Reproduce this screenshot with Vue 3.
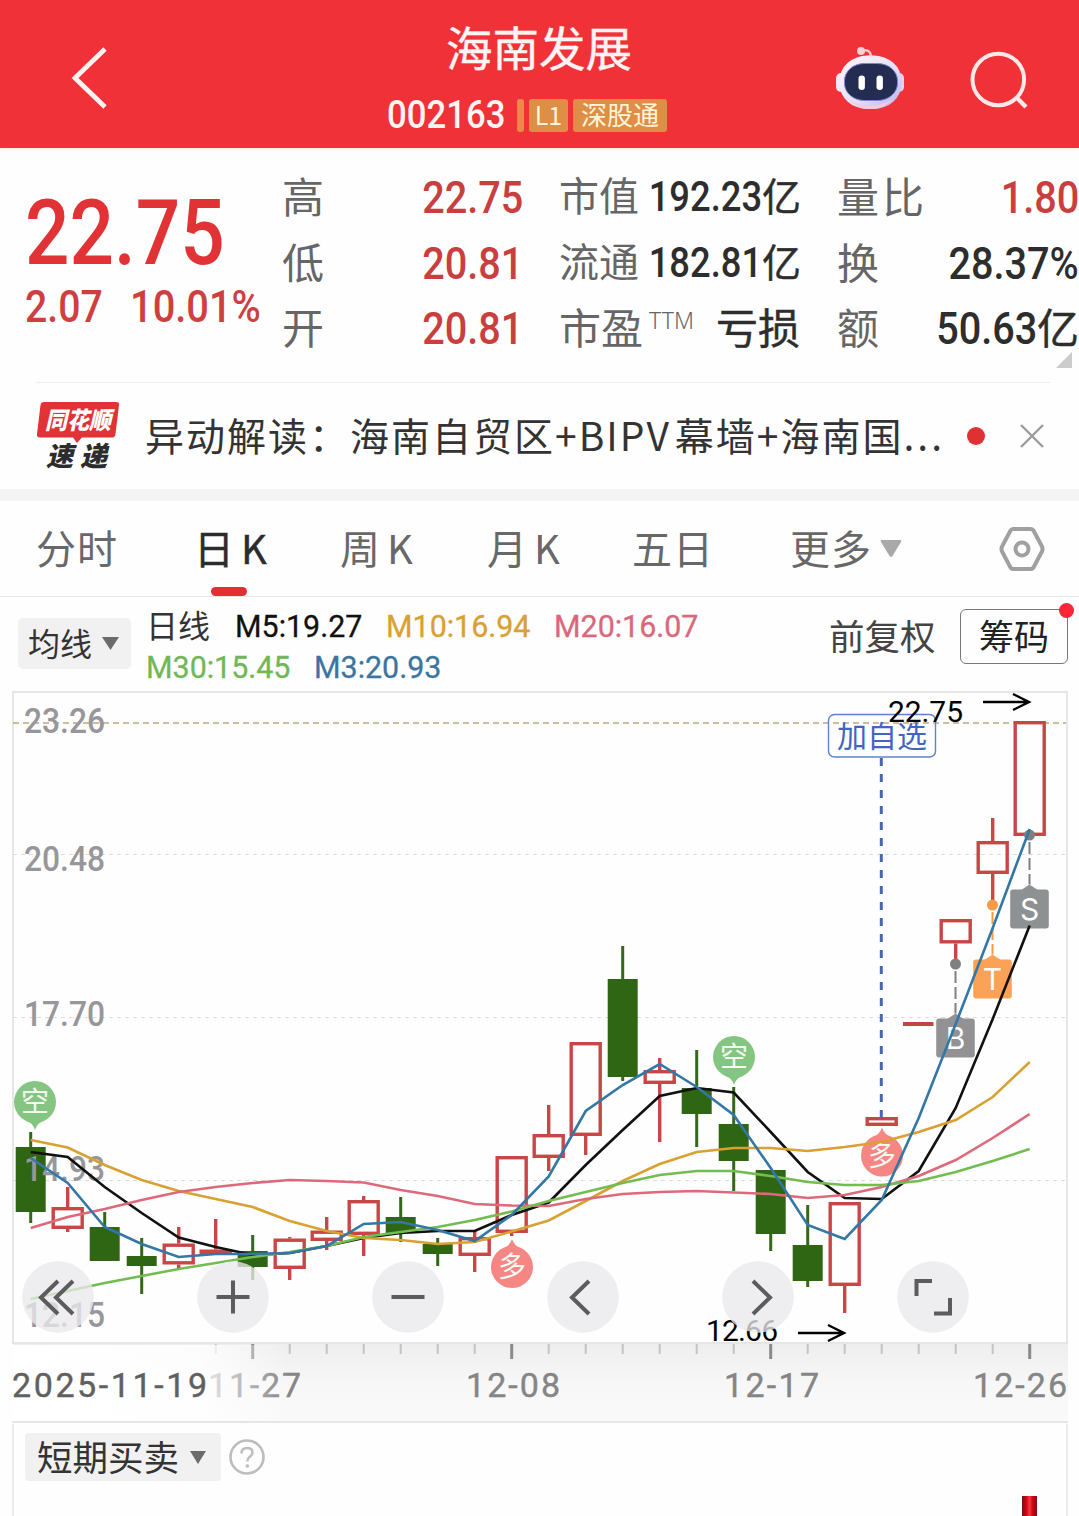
<template>
  <div class="page">
    <header class="topbar">
      <button class="icon-btn back">
        <svg width="40" height="64" viewBox="0 0 40 64">
          <path d="M36 3 L6 32 L36 61" fill="none" stroke="#fff3f2" stroke-width="4.8" />
        </svg>
      </button>
      <div class="stock">
        <h1>海南发展</h1>
        <div class="stock-sub">
          <span class="code">002163</span>
          <i class="tag-bar"></i>
          <span class="tag tag-l1">L1</span>
          <span class="tag tag-sgt">深股通</span>
        </div>
      </div>
      <button class="icon-btn robot">
        <svg width="72" height="66" viewBox="834 46 72 66">
          <defs>
            <linearGradient id="shell" x1="0" y1="0" x2="1" y2="1">
              <stop offset="0" stop-color="#fff4f6" />
              <stop offset="0.55" stop-color="#e6e2fa" />
              <stop offset="1" stop-color="#b4b0ec" />
            </linearGradient>
          </defs>
          <path d="M861 51 Q871 48 871 58" fill="none" stroke="#fbc6cc" stroke-width="2.6" />
          <circle cx="861" cy="51" r="4" fill="#fdd0d5" />
          <rect x="836" y="73" width="10" height="19" rx="5" fill="#f5e6f4" />
          <rect x="894" y="73" width="10" height="19" rx="5" fill="#e2d2f4" />
          <rect x="839.5" y="55.500" width="62" height="53.500" rx="28" ry="25" fill="url(#shell)" />
          <path d="M848 99 Q870 113 893 99 Q884 109 870 109 Q857 109 848 99" fill="#fbc9dd" />
          <rect x="844.500" y="63.500" width="53" height="37" rx="20" ry="17" fill="#242d51" stroke="#7a86cf" stroke-width="1" />
          <rect x="858.500" y="75.500" width="6.400" height="14.500" rx="3.200" fill="#fff" />
          <rect x="876.500" y="75.500" width="6.400" height="14.500" rx="3.200" fill="#fff" />
        </svg>
      </button>
      <button class="icon-btn search">
        <svg width="62" height="62" viewBox="968 50 62 62">
          <circle cx="998.300" cy="79.500" r="25.800" fill="none" stroke="#ffe9e8" stroke-width="4" />
          <path d="M1016 97 L1026 107" stroke="#ffe9e8" stroke-width="4.400" />
        </svg>
      </button>
    </header>

    <section class="quote">
      <div class="price">
        <div class="price-now">22.75</div>
        <div class="price-diff">
          <span class="diff">2.07</span>
          <span class="pct">10.01%</span>
        </div>
      </div>
      <div v-for="(col, i) in quoteCols" :key="i" class="quote-col" :class="'col-' + i">
        <div v-for="cell in col" :key="cell.label" class="cell">
          <span class="label" :class="{ tight: cell.tight }">{{ cell.label }}<sup v-if="cell.sup">{{ cell.sup }}</sup></span>
          <span class="value" :class="{ up: cell.up, narrow: cell.tight }">
            <span v-if="cell.num" class="num">{{ cell.num }}</span><span class="unit">{{ cell.unit }}</span>
          </span>
        </div>
      </div>
      <i class="corner"></i>
    </section>

    <section class="news">
      <div class="logo">
        <svg width="84" height="76" viewBox="36 399 84 76">
          <path d="M44 401 H116 Q119.500 401 119 404 L115.500 433 Q115 436.500 112 436.500 H82 L77 442 L73 436.500 H40 Q36.500 436.500 37 433 L40.500 404 Q41 401 44 401Z" fill="#e13336" />
          <text class="logo-top" x="45" y="428" textLength="66" lengthAdjust="spacingAndGlyphs">同花顺</text>
          <text class="logo-bottom" x="46" y="465" textLength="61">速递</text>
        </svg>
      </div>
      <p>异动解读：海南自贸区+BIPV<span class="after-latin">幕墙+海南国</span><span class="dots">...</span></p>
      <i class="unread"></i>
      <svg class="close" width="24" height="24" viewBox="0 0 24 24">
        <path d="M1 1 L23 23 M23 1 L1 23" stroke="#9b9b9b" stroke-width="2.400" />
      </svg>
    </section>

    <nav class="tabs">
      <span class="tab"><span>分时</span></span>
      <span class="tab active"><span>日<b>K</b></span></span>
      <span class="tab"><span>周<b>K</b></span></span>
      <span class="tab"><span>月<b>K</b></span></span>
      <span class="tab"><span>五日</span></span>
      <span class="tab"><span>更多</span>
        <svg width="22" height="19" viewBox="0 0 22 19"><path d="M2 1 H20 Q22 1 21 3 L12.500 17 Q11 19 9.500 17 L1 3 Q0 1 2 1Z" fill="#a9a9a9" /></svg>
      </span>
      <span class="tab">
        <svg width="46" height="44" viewBox="0 0 46 44">
          <path d="M14 2 H32 Q33.500 2 34.500 3.600 L43 19.500 Q44 22 43 24.500 L34.500 40.400 Q33.500 42 32 42 H14 Q12.500 42 11.500 40.400 L3 24.500 Q2 22 3 19.500 L11.500 3.600 Q12.500 2 14 2Z" fill="none" stroke="#a0a0a0" stroke-width="4" />
          <circle cx="23" cy="22" r="6.500" fill="none" stroke="#a0a0a0" stroke-width="4" />
        </svg>
      </span>
    </nav>

    <section class="ma-bar">
      <div class="select"><span>均线</span>
        <svg width="19" height="13" viewBox="0 0 19 13"><path d="M1 0 H18 L9.500 13Z" fill="#6b6b6b" /></svg>
      </div>
      <div class="ma-list">
        <div class="ma-row">
          <span class="ma-title">日线</span>
          <span class="ma m5">M5:19.27</span>
          <span class="ma m10">M10:16.94</span>
          <span class="ma m20">M20:16.07</span>
        </div>
        <div class="ma-row">
          <span class="ma m30">M30:15.45</span>
          <span class="ma m3">M3:20.93</span>
        </div>
      </div>
      <span class="adjust">前复权</span>
      <span class="chips">筹码<i></i></span>
    </section>

    <svg class="chart" width="1079" height="734" viewBox="0 690 1079 734">
      <defs>
        <linearGradient id="strip" x1="0" y1="0" x2="0" y2="1">
          <stop offset="0" stop-color="#eeeeee" />
          <stop offset="0.5" stop-color="#f7f7f7" />
          <stop offset="1" stop-color="#fafafa" />
        </linearGradient>
        <linearGradient id="fade" x1="0" y1="0" x2="1" y2="0">
          <stop offset="0" stop-color="#fff" />
          <stop offset="0.68" stop-color="#fff" stop-opacity="0.850" />
          <stop offset="1" stop-color="#fff" stop-opacity="0" />
        </linearGradient>
      </defs>

      <!-- date strip -->
      <rect x="13" y="1344" width="1055" height="79" fill="url(#strip)" />
      <rect
        v-for="t in ticks"
        :key="'t' + t.x"
        :x="t.x - t.w / 2"
        y="1344"
        :width="t.w"
        :height="t.major ? 15 : 10"
        :fill="t.major ? '#8a8a8a' : '#c4c4c4'"
      />
      <text class="date" x="208" y="1397" textLength="93">11-27</text>
      <rect x="13" y="1345" width="275" height="76" fill="url(#fade)" />
      <text class="date first" x="12" y="1397" textLength="195">2025-11-19</text>
      <text class="date" x="466" y="1397" textLength="94">12-08</text>
      <text class="date" x="724" y="1397" textLength="95">12-17</text>
      <text class="date" x="973" y="1397" textLength="94">12-26</text>

      <!-- frame and grid -->
      <rect x="13" y="692" width="1054" height="651" fill="#fefefe" stroke="#e6e6e6" stroke-width="2" />
      <path d="M12 1422 H1068" stroke="#e6e6e6" stroke-width="2" />
      <path d="M13 854.500 H1066 M13 1017.500 H1066 M13 1180.500 H1066" stroke="#dcdcdc" stroke-width="1.200" stroke-dasharray="4 4" />
      <path d="M13 723 H1066" stroke="#bfa878" stroke-width="1.700" stroke-dasharray="6 4" />

      <g v-for="c in candles" :key="c.x">
        <template v-if="c.up">
          <path :d="c.wicks" stroke="#c84646" stroke-width="3.400" />
          <rect :x="c.x - 14.500" :y="c.top + 1.700" width="29" :height="c.h - 3.400" fill="none" stroke="#c84646" stroke-width="3.400" />
        </template>
        <template v-else>
          <path :d="c.wicks" stroke="#35691a" stroke-width="3" />
          <rect :x="c.x - 15" :y="c.top" width="30" :height="c.h" fill="#2f6614" />
        </template>
      </g>
      <path d="M903 1024 H933.500" stroke="#c04545" stroke-width="4" />

      <g class="axis">
        <text x="24" y="733" textLength="81" lengthAdjust="spacingAndGlyphs">23.26</text>
        <text x="24" y="871" textLength="81" lengthAdjust="spacingAndGlyphs">20.48</text>
        <text x="24" y="1026" textLength="81" lengthAdjust="spacingAndGlyphs">17.70</text>
        <text x="24" y="1181" textLength="81" lengthAdjust="spacingAndGlyphs">14.93</text>
        <text x="24" y="1327" textLength="81" lengthAdjust="spacingAndGlyphs">12.15</text>
      </g>

      <!-- long / short signals -->
      <g v-for="s in signals" :key="s.x">
        <circle :cx="s.x" :cy="s.y" r="21" :fill="s.short ? '#85c582' : '#f58683'" />
        <path :d="s.tip" :fill="s.short ? '#85c582' : '#f58683'" />
        <text class="signal" :x="s.x" :y="s.y + 10">{{ s.short ? '空' : '多' }}</text>
      </g>

      <!-- trade marks -->
      <g v-for="m in marks" :key="m.text">
        <path :d="`M${m.x} ${m.dot + 7} V${m.top - 5}`" :stroke="m.line" stroke-width="2" stroke-dasharray="12 4" />
        <circle :cx="m.x" :cy="m.dot" r="5.500" :fill="m.line" />
        <path :d="`M${m.x - 9} ${m.top + 1} L${m.x} ${m.top - 5} L${m.x + 9} ${m.top + 1}Z`" :fill="m.color" />
        <rect :x="m.x - 19.300" :y="m.top" width="38.600" height="39" rx="3" :fill="m.color" />
        <text class="mark" :x="m.x" :y="m.top + 30">{{ m.text }}</text>
      </g>

      <polyline v-for="l in lines" :key="l.color" :points="l.points" fill="none" :stroke="l.color" stroke-width="2.600" />

      <path d="M881.300 758 V1118" stroke="#4668b4" stroke-width="3" stroke-dasharray="8 8" />
      <rect x="828.500" y="714.500" width="107" height="42.500" rx="6" fill="none" stroke="#5e83c8" stroke-width="1.400" />
      <text class="watch" x="837" y="747" textLength="90">加自选</text>
      <text class="extreme" x="888" y="722" textLength="75">22.75</text>
      <path d="M983 702 H1029 M1013 694 L1029 702 L1013 710" class="arrow" />
      <text class="extreme" x="706" y="1341" textLength="72">12.66</text>
      <path d="M798 1333 H844 M828 1325 L844 1333 L828 1341" class="arrow" />

      <!-- floating controls -->
      <g v-for="b in buttons" :key="b.x" fill="none" stroke="#5c5c5c" stroke-width="4">
        <circle :cx="b.x" cy="1297" r="35.800" fill="#e9e8ea" fill-opacity="0.780" stroke="none" />
        <path :d="b.d" />
      </g>
    </svg>

    <section class="sub-panel">
      <div class="select wide"><span>短期买卖</span>
        <svg width="18" height="13" viewBox="0 0 18 13"><path d="M1 0 H17 L9 13Z" fill="#6b6b6b" /></svg>
      </div>
      <svg class="help" width="36" height="36" viewBox="0 0 36 36">
        <circle cx="18" cy="18" r="16.500" fill="none" stroke="#bdbdbd" stroke-width="2.600" />
        <path d="M12.500 14.500 Q12.500 9 18 9 Q23.500 9 23.500 13.500 Q23.500 16 20.500 18 Q18.300 19.500 18.300 22.500" fill="none" stroke="#bdbdbd" stroke-width="2.400" />
        <circle cx="18.300" cy="27" r="1.800" fill="#bdbdbd" />
      </svg>
      <i class="volume"></i>
    </section>
  </div>
</template>

<script setup>
const quoteCols = [
  [
    { label: '高', num: '22.75', up: true },
    { label: '低', num: '20.81', up: true },
    { label: '开', num: '20.81', up: true },
  ],
  [
    { label: '市值', num: '192.23', unit: '亿', tight: true },
    { label: '流通', num: '182.81', unit: '亿', tight: true },
    { label: '市盈', sup: 'TTM', unit: '亏损' },
  ],
  [
    { label: '量比', num: '1.80', up: true },
    { label: '换', num: '28.37%' },
    { label: '额', num: '50.63', unit: '亿' },
  ],
];

const STEP = 37;
const xAt = (i) => 30.7 + i * STEP;

// [up, body top, body bottom, high, low]
const rawCandles = [
  [0, 1147, 1212, 1132, 1223],
  [1, 1207, 1229, 1187, 1232],
  [0, 1227, 1261, 1212, 1261],
  [0, 1256, 1266, 1238, 1294],
  [1, 1243.5, 1264.5, 1227, 1268],
  [1, 1249.5, 1255, 1219, 1255],
  [0, 1251, 1267, 1235, 1280],
  [1, 1238.5, 1269, 1237, 1280],
  [1, 1230.5, 1241, 1217, 1250],
  [1, 1200, 1235, 1196, 1256],
  [0, 1217, 1233, 1197, 1242],
  [0, 1244, 1254, 1238, 1266],
  [1, 1237, 1256, 1230, 1272],
  [1, 1156, 1233, 1156, 1236],
  [1, 1134, 1158, 1105, 1171],
  [1, 1042, 1136, 1042, 1155],
  [0, 979, 1077, 946, 1081],
  [1, 1070, 1084, 1058, 1142],
  [0, 1088, 1114, 1050, 1147],
  [0, 1124, 1161, 1087, 1191],
  [0, 1170, 1234, 1170, 1251],
  [0, 1245, 1281, 1205, 1287],
  [1, 1202, 1286, 1202, 1313],
  [1, 1117, 1126, 1117, 1126],
  null,
  [1, 919, 943.5, 919, 963],
  [1, 841, 874, 818, 905],
  [1, 721, 836, 721, 836],
];

const candles = rawCandles
  .map((c, i) => c && {
    x: xAt(i),
    up: !!c[0],
    top: c[1],
    h: c[2] - c[1],
    wicks: `M${xAt(i)} ${c[3]} V${c[1]} M${xAt(i)} ${c[2]} V${c[4]}`,
  })
  .filter(Boolean);

const toPoints = (ys) => ys.map((y, i) => `${xAt(i)},${y}`).join(' ');

const lines = [
  { color: '#111111', points: toPoints([1152, 1157, 1187, 1213, 1237.5, 1247, 1255, 1253, 1246, 1238, 1233, 1231, 1231, 1215, 1202.5, 1165, 1130, 1096, 1088, 1092.5, 1132, 1172, 1198, 1199, 1171, 1108, 1019, 925.5]) },
  { color: '#d9a032', points: toPoints([1140, 1147.5, 1165, 1180, 1191, 1199, 1207, 1221, 1231, 1238, 1240, 1244, 1242, 1231.5, 1220.5, 1201, 1181, 1164, 1152, 1148, 1148, 1151, 1147, 1142, 1132, 1120, 1097, 1062]) },
  { color: '#de697b', points: toPoints([1228, 1217, 1209, 1200, 1192, 1187, 1183, 1180, 1181, 1182.5, 1190, 1196, 1204, 1205.5, 1206, 1199, 1194, 1192, 1191, 1192.5, 1194, 1198, 1195, 1187, 1176, 1160, 1138, 1114]) },
  { color: '#72bd50', points: toPoints([1299, 1291, 1283, 1276, 1269, 1263, 1257, 1252, 1246, 1237, 1232, 1227, 1220, 1211.5, 1201, 1192, 1183, 1175, 1171, 1171, 1176, 1182, 1185, 1185, 1181, 1172, 1161, 1149]) },
  { color: '#3477a5', points: toPoints([1158, 1183, 1227, 1244, 1257, 1254, 1254, 1253, 1246, 1224, 1222, 1230, 1241, 1215, 1176.5, 1111, 1085, 1064, 1087, 1115, 1168, 1225, 1239, 1200, 1118, 1024, 928, 829]) },
];

const ticks = Array.from({ length: 23 }, (_, k) => {
  const i = k + 5;
  const major = (i - 6) % 7 === 0;
  return { x: xAt(i), major, w: major ? 3 : 2 };
});

const signals = [
  { x: 35, y: 1102, short: true },
  { x: 734, y: 1057, short: true },
  { x: 512, y: 1267 },
  { x: 882, y: 1155.5 },
].map((s) => {
  const d = s.short ? 1 : -1;
  return { ...s, tip: `M${s.x - 11} ${s.y + 17 * d} Q${s.x - 2} ${s.y + 21 * d} ${s.x} ${s.y + 28 * d} Q${s.x + 2} ${s.y + 21 * d} ${s.x + 11} ${s.y + 17 * d}Z` };
});

const marks = [
  { text: 'S', x: 1029.5, dot: 835, top: 889.5, color: '#8e9192', line: '#7b8083' },
  { text: 'T', x: 992.5, dot: 905, top: 959.5, color: '#fba257', line: '#f59b45' },
  { text: 'B', x: 955.5, dot: 964, top: 1018.5, color: '#929294', line: '#808082' },
];

const buttons = [
  { x: 58, d: 'M58 1281 L41 1297.500 L58 1314 M73 1281 L56 1297.500 L73 1314' },
  { x: 233, d: 'M216.500 1297 H249.500 M233 1280.500 V1313.500' },
  { x: 408, d: 'M391.500 1297 H424.500' },
  { x: 583, d: 'M589 1281 L572 1297.500 L589 1314' },
  { x: 758, d: 'M753 1281 L770 1297.500 L753 1314' },
  { x: 933, d: 'M932 1281 H916.500 V1296 M934 1313.500 H950 V1298' },
];
</script>

<style>
body {
  margin: 0;
  background: #fefefe;
}
</style>

<style scoped>
.page {
  width: 1079px;
  height: 1516px;
  overflow: hidden;
  background: #fefefe;
  color: #333;
  font-family: "Noto Sans CJK SC", sans-serif;
}

.topbar {
  display: flex;
  align-items: flex-start;
  height: 148px;
  background: #f03238;
  box-shadow: 0 2px 2px #fdeee8;
}

.icon-btn {
  border: 0;
  padding: 0;
  background: none;
}

.icon-btn svg {
  display: block;
}

.back {
  margin: 46px 0 0 69px;
}

.stock {
  width: 304px;
  margin-left: 278px;
}

h1 {
  margin: 13px 0 0;
  text-align: center;
  font-size: 46.5px;
  line-height: 66px;
  font-weight: 400;
  color: #fff4f3;
  -webkit-text-stroke: 0.4px currentColor;
  white-space: nowrap;
}

.stock-sub {
  display: flex;
  align-items: center;
  height: 34px;
  margin-top: 19px;
}

.code {
  width: 130px;
  font: 500 39px/34px Roboto, sans-serif;
  color: #fff4f3;
  transform: scaleX(0.89);
  transform-origin: left;
}

.tag-bar {
  width: 7px;
  height: 33px;
  border-radius: 3px;
  background: #e98c49;
}

.tag {
  height: 33px;
  margin-left: 5px;
  border-radius: 3px;
  background: #df8e47;
  color: #fff6d8;
  text-align: center;
  font-size: 26px;
  line-height: 30px;
  white-space: nowrap;
}

.tag-l1 {
  width: 39px;
  font-size: 25px;
}

.tag-sgt {
  width: 94px;
}

.robot {
  margin: 46px 0 0 143px;
}

.search {
  margin: 50px 0 0 62px;
}

.quote {
  position: relative;
  display: flex;
  height: 234px;
}

.price {
  width: 257px;
  padding-left: 25px;
  color: #e13335;
  font-family: Roboto, sans-serif;
  font-weight: 500;
}

.price-now {
  height: 90px;
  margin-top: 40px;
  font-size: 91px;
  line-height: 90px;
  transform: scaleX(0.86);
  transform-origin: left;
}

.price-diff {
  display: flex;
  font-size: 45px;
  line-height: 58px;
  color: #cf3f3f;
}

.price-diff span {
  width: 105px;
  transform: scaleX(0.87);
  transform-origin: left;
}

.price-diff .pct {
  transform: scaleX(0.885);
}

.quote-col {
  width: 241px;
  padding-top: 14px;
}

.col-1 {
  margin-left: 36px;
}

.col-2 {
  width: 242px;
  margin-left: 37px;
}

.cell {
  display: flex;
  justify-content: space-between;
  height: 65.5px;
  line-height: 65.5px;
  white-space: nowrap;
}

.label {
  font-size: 42px;
  color: #666;
}

.col-2 .label {
  letter-spacing: 3px;
}

.label.tight {
  font-size: 40px;
}

sup {
  display: inline-block;
  margin-left: 6px;
  font: 300 23px/24px "Noto Sans", sans-serif;
  vertical-align: 15px;
}

.value {
  color: #2d2d2d;
  font-size: 42px;
}

.num {
  display: inline-block;
  font: 500 44px/65px Roboto, sans-serif;
  transform: scaleX(0.9);
  transform-origin: right;
}

.narrow {
  margin-right: -1px;
  font-size: 39px;
}

.narrow .num {
  margin-left: -22px;
  font-size: 42px;
  transform: scaleX(0.865);
}

.unit {
  -webkit-text-stroke: 0.4px currentColor;
}

.up {
  color: #c93f3f;
}

.corner {
  position: absolute;
  right: 7px;
  bottom: 14px;
  border-left: 16px solid transparent;
  border-bottom: 16px solid #ccc;
}

.news {
  display: flex;
  align-items: center;
  height: 106px;
  margin-left: 36px;
  border-top: 1px solid #ededed;
  margin-right: 29px;
}

.logo {
  width: 84px;
  height: 72px;
}

.logo-top {
  font-size: 24px;
  font-weight: 900;
  font-style: italic;
  fill: #fff;
}

.logo-bottom {
  font-size: 27px;
  font-weight: 900;
  font-style: italic;
  fill: #2c2c2c;
}

.news p {
  width: 821px;
  margin: 0 0 5px 25px;
  font-size: 39px;
  letter-spacing: 2px;
  white-space: nowrap;
}

.after-latin {
  margin-left: 4px;
}

.dots {
  letter-spacing: 3px;
}

.unread {
  width: 18px;
  height: 18px;
  margin-left: 1px;
  border-radius: 50%;
  background: #e13033;
}

.close {
  margin-left: 35px;
}

.tabs {
  display: grid;
  grid-template-columns: 158px 146px 147px 145px 158px 209px auto;
  align-items: center;
  height: 95px;
  padding-left: 36px;
  border-top: 12px solid #f4f4f4;
  border-bottom: 1px solid #e6e6e6;
  color: #686868;
  font-size: 40px;
  letter-spacing: 1px;
}

.tab {
  position: relative;
  display: flex;
  align-items: center;
  height: 95px;
  white-space: nowrap;
}

.tab span {
  padding-bottom: 4px;
}

.tab b {
  margin-left: 6px;
  font-weight: inherit;
}

.tab svg {
  margin-left: 8px;
}

.tab:last-child svg {
  margin-left: 0;
}

.active {
  color: #2c2c2c;
  -webkit-text-stroke: 0.4px currentColor;
}

.active::after {
  content: "";
  position: absolute;
  left: 17px;
  bottom: 0;
  width: 36px;
  height: 9px;
  border-radius: 5px;
  background: #e13033;
}

.ma-bar {
  display: flex;
  align-items: flex-start;
  height: 93px;
  white-space: nowrap;
}

.select {
  display: flex;
  align-items: center;
  justify-content: space-between;
  box-sizing: border-box;
  width: 113px;
  height: 51px;
  margin: 21px 0 0 18px;
  padding: 0 11px 0 10px;
  border-radius: 5px;
  background: #f1f1f1;
  font-size: 32px;
}

.select span {
  padding-bottom: 3px;
}

.ma-list {
  width: 676px;
  padding: 9px 0 0 15px;
}

.ma-row {
  display: flex;
  height: 41px;
  line-height: 41px;
}

.ma-title {
  width: 89px;
  font-size: 32px;
  line-height: 37px;
}

.ma {
  width: 151px;
  font: 400 32px/41px Roboto, sans-serif;
  -webkit-text-stroke: 0.3px currentColor;
  transform: scaleX(0.95);
  transform-origin: left;
}

.m5 { color: #111; }
.m10 { width: 168px; color: #d9a032; }
.m20 { color: #d9687c; }
.m30 { width: 168px; color: #70b857; }
.m3 { color: #3a75a2; }

.adjust {
  width: 131px;
  margin-top: 13px;
  margin-left: 7px;
  font-size: 35.5px;
  line-height: 50px;
  color: #444;
}

.chips {
  position: relative;
  box-sizing: border-box;
  width: 108px;
  height: 55px;
  margin-top: 12px;
  border: 1px solid #777;
  border-radius: 6px;
  text-align: center;
  font-size: 35px;
  line-height: 50px;
  color: #222;
}

.chips i {
  position: absolute;
  top: -7px;
  right: -7px;
  width: 15px;
  height: 15px;
  border-radius: 50%;
  background: #fb2439;
}

.chart {
  display: block;
}

.chart text {
  font-family: Roboto, "Noto Sans CJK SC", sans-serif;
}

.axis text {
  font-size: 35px;
  font-weight: 500;
  fill: #97979b;
}

.date {
  font-size: 34px;
  fill: #858585;
  stroke: #858585;
  stroke-width: 0.4px;
}

.first {
  fill: #606060;
  stroke: #606060;
}

.signal {
  font-size: 28px;
  fill: #f4fbf0;
  text-anchor: middle;
}

.chart .mark {
  font-family: Inter, sans-serif;
  font-size: 30px;
  fill: #fff;
  text-anchor: middle;
}

.watch {
  font-size: 30px;
  fill: #4464c2;
}

.extreme {
  font-size: 30px;
  fill: #000;
}

.arrow {
  fill: none;
  stroke: #000;
  stroke-width: 2.4;
}

.sub-panel {
  position: relative;
  display: flex;
  width: 1056px;
  height: 93px;
  margin-left: 12px;
  border-left: 2px solid #ececec;
  border-right: 2px solid #ececec;
  box-sizing: border-box;
}

.wide {
  width: 196px;
  height: 48px;
  margin: 9px 0 0 11px;
  padding: 0 14px 0 12px;
  border-radius: 4px;
  font-size: 35.5px;
}

.help {
  margin: 15px 0 0 8px;
}

.volume {
  width: 15px;
  height: 24px;
  margin: 72px 29px 0 auto;
  background: linear-gradient(90deg, #6e1518 0, #d5000f 28%, #ee3a45 50%, #d5000f 72%, #6e1518 100%);
}
</style>
